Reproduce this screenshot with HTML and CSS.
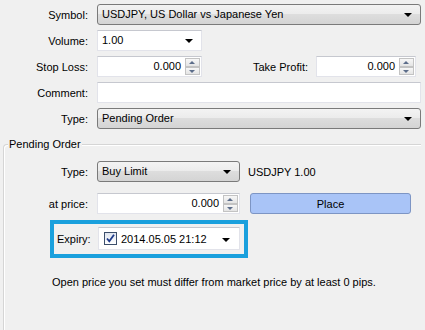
FILE: index.html
```html
<!DOCTYPE html>
<html lang="en">
<head>
    <meta charset="UTF-8">
    <title>Order</title>
    <link rel="stylesheet" href="styles.css">
</head>
<body>
    <div class="dlg">
        <div class="rows">
            <label>Symbol:</label>
            <div class="combo btn">USDJPY, US Dollar vs Japanese Yen<span class="arrow"></span></div>

            <label>Volume:</label>
            <div class="combo edit vol">1.00<span class="arrow"></span></div>

            <label>Stop Loss:</label>
            <div class="pair">
                <div class="num sl"><span class="val">0.000</span><span class="spin"><i class="up"></i><i class="down"></i></span></div>
                <label class="tp-label">Take Profit:</label>
                <div class="num tp"><span class="val">0.000</span><span class="spin"><i class="up"></i><i class="down"></i></span></div>
            </div>

            <label>Comment:</label>
            <div class="text"></div>

            <label>Type:</label>
            <div class="combo btn">Pending Order<span class="arrow"></span></div>
        </div>

        <div class="group">
            <div class="legend"><span>Pending Order</span></div>
            <div class="rows inner">
                <label>Type:</label>
                <div class="pair">
                    <div class="combo btn ptype">Buy Limit<span class="arrow"></span></div>
                    <span class="sym">USDJPY 1.00</span>
                </div>

                <label>at price:</label>
                <div class="pair">
                    <div class="num price"><span class="val">0.000</span><span class="spin"><i class="up"></i><i class="down"></i></span></div>
                    <button class="place">Place</button>
                </div>
            </div>

            <div class="expiry">
                <label>Expiry:</label>
                <div class="date">
                    <span class="check">
                        <svg width="11" height="11" viewBox="0 0 11 11"><path d="M2 5.5 L4.3 8.3 L9 1.8" fill="none" stroke="#1d3a8a" stroke-width="1.8"/></svg>
                    </span>
                    <span class="dt">2014.05.05 21:12</span>
                    <span class="arrow"></span>
                </div>
            </div>

            <p class="note">Open price you set must differ from market price by at least 0 pips.</p>
        </div>
    </div>
</body>
</html>
```
FILE: styles.css
```css
body {
    margin: 0;
    background: #f0f0f0;
    font-family: "Liberation Sans", Arial, sans-serif;
    font-size: 11px;
    color: #000;
    overflow: hidden;
}
.dlg {
    padding: 4px 4px 0 0;
}
.rows {
    display: grid;
    grid-template-columns: 88px 1fr;
    column-gap: 9px;
    row-gap: 5px;
    align-items: center;
}
.rows > label {
    text-align: right;
}
.pair {
    display: flex;
    align-items: center;
}
.combo {
    position: relative;
    height: 21px;
    box-sizing: border-box;
    line-height: 19px;
    padding-left: 4px;
}
.combo.btn {
    border: 1px solid #7a7a7a;
    border-radius: 3px;
    background: linear-gradient(#f3f3f3, #ebebeb 50%, #dddddd 50%, #d4d4d4);
}
.combo.edit {
    background: #fff;
    border: 1px solid #e2e3ea;
    border-top-color: #c6c8cf;
}
.vol {
    width: 105px;
}
.arrow {
    position: absolute;
    right: 8px;
    top: 8px;
    width: 0;
    height: 0;
    border-left: 4px solid transparent;
    border-right: 4px solid transparent;
    border-top: 4px solid #000;
}
.num {
    display: flex;
    height: 21px;
    box-sizing: border-box;
    background: #fff;
    border: 1px solid #e2e3ea;
    border-top-color: #c6c8cf;
}
.num .val {
    flex: 1;
    text-align: right;
    line-height: 19px;
    padding-right: 4px;
}
.spin {
    display: flex;
    flex-direction: column;
    width: 15px;
    padding: 1px 1px 1px 0;
}
.spin i {
    flex: 1;
    position: relative;
    border: 1px solid #c3c3c3;
    background: linear-gradient(#f7f7f7, #e4e4e4);
}
.spin i::after {
    content: "";
    position: absolute;
    left: 3px;
    top: 2px;
    border-left: 3px solid transparent;
    border-right: 3px solid transparent;
}
.spin .up::after {
    border-bottom: 3px solid #5c6d8a;
}
.spin .down::after {
    border-top: 3px solid #5c6d8a;
}
.sl {
    width: 105px;
}
.tp-label {
    margin-left: auto;
    margin-right: 8px;
}
.tp {
    width: 100px;
    margin-right: 5px;
}
.text {
    height: 21px;
    box-sizing: border-box;
    background: #fff;
    border: 1px solid #e2e3ea;
    border-top-color: #c6c8cf;
}
.group {
    margin: 15px 0 0 3px;
    border-top: 1px solid #d5d5d5;
    border-left: 1px solid #d5d5d5;
    border-top-left-radius: 4px;
    box-shadow: inset 1px 1px 0 #fff;
    height: 200px;
}
.legend {
    height: 14px;
    margin-top: -8px;
    padding-left: 4px;
    line-height: 14px;
}
.legend span {
    background: #f0f0f0;
    padding: 0 1px;
}
.rows.inner {
    grid-template-columns: 84px 1fr;
    padding-top: 10px;
    row-gap: 11px;
}
.ptype {
    width: 143px;
}
.sym {
    margin-left: 8px;
}
.price {
    width: 143px;
}
.place {
    margin-left: 10px;
    width: 161px;
    height: 21px;
    border: 1px solid #7d95c4;
    border-radius: 3px;
    background: #a9c4f7;
    font-family: inherit;
    font-size: 11px;
    color: #000;
    padding: 0;
}
.expiry {
    display: inline-flex;
    align-items: center;
    margin: 6px 0 0 46px;
    border: 4px solid #1aa0dd;
    padding: 3px 4px 4px 3px;
    width: 198px;
    box-sizing: border-box;
}
.expiry label {
    width: 41px;
}
.date {
    position: relative;
    display: flex;
    align-items: center;
    width: 142px;
    height: 23px;
    box-sizing: border-box;
    background: #fff;
    border: 1px solid #e2e3ea;
    border-top-color: #c6c8cf;
    padding-left: 5px;
}
.check {
    display: inline-flex;
    align-items: center;
    justify-content: center;
    width: 13px;
    height: 13px;
    box-sizing: border-box;
    border: 1px solid #3c4f6b;
    background: linear-gradient(#dfe5ef, #ffffff);
    margin-right: 4px;
}
.date .arrow {
    top: 10px;
    right: 9px;
}
.note {
    margin: 17px 0 0 48px;
    line-height: 14px;
}
```
